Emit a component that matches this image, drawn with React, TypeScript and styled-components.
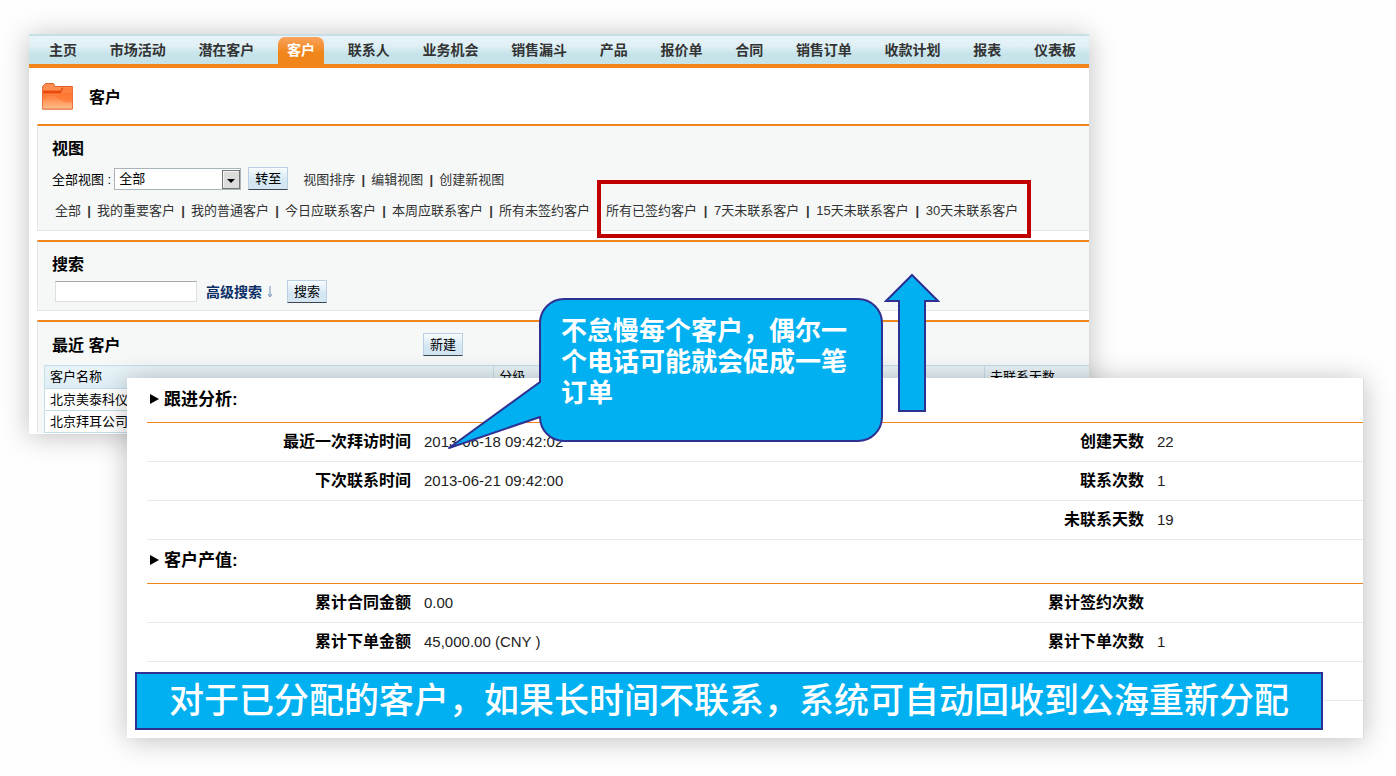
import React from "react";
import styled, { createGlobalStyle } from "styled-components";

const ORANGE = "#f08519";
const SKY = "#00b0f0";
const INDIGO = "#2e3192";

const GlobalStyle = createGlobalStyle`
  *, *::before, *::after { box-sizing: border-box; }
  body {
    margin: 0;
    background: #fefefe;
    color: #000;
    font-family: "Liberation Sans", "Noto Sans CJK SC", sans-serif;
    font-size: 13px;
    line-height: 20px;
  }
  h1, h2, p, ul { margin: 0; padding: 0; }
  button, input, select { font: inherit; color: inherit; }
`;

const Slide = styled.main`
  padding: 34px 32px 38px 29px;
  overflow: hidden;
`;

const Sheet = styled.section`
  background: #fff;
  box-shadow: 0 2px 26px rgba(0, 0, 0, 0.25);
`;

/* ---------- CRM window ---------- */

const CrmWindow = styled(Sheet)`
  margin-right: 275px;
  padding-bottom: 1px;
`;

const NavBar = styled.nav`
  display: flex;
  justify-content: space-between;
  align-items: flex-end;
  height: 34px;
  padding: 0 4px 0 11px;
  border-top: 2px solid #c8dfe7;
  border-bottom: 4px solid ${ORANGE};
  background: linear-gradient(#e8f3f8, #e0f0f5 35%, #c6e3ea 65%, #c6e3ea);
`;

const NavLink = styled.a<{ $active?: boolean }>`
  height: 27px;
  padding: 0 9px;
  border-radius: 7px 7px 0 0;
  font-size: 14px;
  font-weight: bold;
  line-height: 26px;
  white-space: nowrap;
  text-decoration: none;
  color: ${(p) => (p.$active ? "#fff" : "#333")};
  background: ${(p) => (p.$active ? `linear-gradient(#f9a25b, ${ORANGE} 60%)` : "none")};
`;

const PageHeader = styled.header`
  display: flex;
  align-items: center;
  gap: 16px;
  height: 56px;
  padding-left: 13px;
`;

const PageTitle = styled.h1`
  padding-top: 4px;
  font-size: 16px;
  line-height: 24px;
`;

const Block = styled.section`
  margin: 0 0 9px 8px;
  border-top: 2px solid ${ORANGE};
  border-left: 1px solid #e3e8e8;
  border-bottom: 1px solid #e3e8e8;
  background: #f6f8f8;

  &:last-child { margin-bottom: 0; border-bottom: 0; }
`;

const BlockTitle = styled.h2`
  padding: 11px 0 0 14px;
  font-size: 16px;
  line-height: 24px;
`;

const ViewRow = styled.div`
  display: flex;
  align-items: flex-end;
  height: 24px;
  margin-top: 5px;
  padding-left: 14px;
  white-space: nowrap;
`;

const SelectFrame = styled.span`
  position: relative;
  display: block;
  width: 127px;
  height: 22px;
  margin: 0 7px 0 3px;

  svg {
    position: absolute;
    top: 2px;
    right: 1px;
    pointer-events: none;
  }
`;

const ViewSelect = styled.select`
  width: 100%;
  height: 22px;
  padding: 0 4px;
  appearance: none;
  border: 1px solid #a9b3ba;
  border-radius: 0;
  background: #fff;
  line-height: 20px;
`;

const PushButton = styled.button`
  width: 40px;
  height: 23px;
  padding: 0;
  border: 1px solid #b9d0e4;
  border-bottom-color: #3d4650;
  background: linear-gradient(#f8fcfd, #d3e6f2 60%);
  line-height: 20px;
`;

const LinkList = styled.ul<{ $indent?: number; $gap?: number }>`
  display: flex;
  height: 20px;
  padding-left: ${(p) => p.$indent ?? 0}px;
  list-style: none;
  white-space: nowrap;

  li + li::before {
    content: "|";
    width: ${(p) => p.$gap ?? 16}px;
    text-align: center;
    font-weight: bold;
    color: #333;
  }
`;

const LinkItem = styled.li`
  display: flex;
`;

const TextLink = styled.a`
  color: #333;
  text-decoration: none;
`;

const ViewLinks = styled.div`
  display: flex;
  margin: 11px 0 9px;
`;

const Marked = styled.div`
  position: relative;
  margin-left: 16px;

  &::after {
    content: "";
    position: absolute;
    inset: -21px -13px -17px -9px;
    border: 4px solid #c00000;
    pointer-events: none;
  }
`;

const SearchForm = styled.form`
  display: flex;
  align-items: center;
  padding: 3px 0 7px 17px;
`;

const SearchBox = styled.input`
  width: 142px;
  height: 21px;
  padding: 0 4px;
  border: 1px solid #dcdfe0;
  border-top-color: #a5a9ab;
  background: #fff;
`;

const AdvancedLink = styled.a`
  display: flex;
  align-items: center;
  gap: 5px;
  margin: 0 14px 0 9px;
  font-size: 14px;
  font-weight: bold;
  color: #0b2f66;
  text-decoration: none;
`;

const RecentHead = styled.div`
  display: grid;
  grid-template-columns: 385px 40px;
  align-items: end;
  height: 43px;
  padding-bottom: 9px;

  ${BlockTitle} { padding-top: 0; line-height: 20px; }
`;

const CustomerTable = styled.table`
  width: calc(100% - 6px);
  margin-left: 6px;
  table-layout: fixed;
  border-collapse: collapse;
  background: #fff;

  th, td {
    height: 22px;
    padding: 0 5px;
    border: 1px solid #c5dfe8;
    border-right: 0;
    line-height: 20px;
    font-weight: normal;
    text-align: left;
    white-space: nowrap;
  }
  th { height: 23px; background: linear-gradient(#eaf4f8, #dcedf4); }
`;

/* ---------- Follow-up detail sheet ---------- */

const DetailSheet = styled(Sheet)`
  position: relative;
  min-height: 360px;
  margin: -56px 0 0 98px;
  padding: 1px 0 0 20px;
  border-right: 1px solid #dcdcdc;
`;

const DetailHeading = styled.h2`
  display: flex;
  align-items: center;
  gap: 5px;
  height: 44px;
  padding: 0 0 2px 3px;
  border-bottom: 1px solid ${ORANGE};
  font-size: 17px;
  line-height: 24px;
`;

const DetailTable = styled.table`
  width: 100%;
  table-layout: fixed;
  border-collapse: separate;
  border-spacing: 0;
  line-height: 24px;

  th, td {
    height: 39px;
    padding: 0;
    border-bottom: 1px solid #e9e9e9;
    white-space: nowrap;
  }
  th { padding-right: 13px; font-size: 16px; text-align: right; }
  td { font-size: 15px; color: #222; }
`;

const Banner = styled.p`
  position: absolute;
  left: 8px;
  right: 40px;
  bottom: 8px;
  height: 58px;
  border: 2px solid ${INDIGO};
  background: ${SKY};
  color: #fff;
  font-size: 35px;
  font-weight: 500;
  line-height: 54px;
  text-align: center;
  white-space: nowrap;
`;

const Callout = styled.aside`
  position: absolute;
  left: 320px;
  top: -81px;
  width: 437px;
  height: 153px;

  svg { display: block; }
`;

const CalloutText = styled.p`
  position: absolute;
  left: 114px;
  top: 19px;
  width: 290px;
  color: #fff;
  font-size: 26px;
  font-weight: bold;
  line-height: 31px;
`;

const UpArrow = styled.svg`
  position: absolute;
  left: 757px;
  top: -106px;
`;

const NAV = [
  "主页", "市场活动", "潜在客户", "客户", "联系人", "业务机会", "销售漏斗",
  "产品", "报价单", "合同", "销售订单", "收款计划", "报表", "仪表板",
];

const VIEW_ACTIONS = ["视图排序", "编辑视图", "创建新视图"];
const VIEWS = ["全部", "我的重要客户", "我的普通客户", "今日应联系客户", "本周应联系客户", "所有未签约客户"];
const MARKED_VIEWS = ["所有已签约客户", "7天未联系客户", "15天未联系客户", "30天未联系客户"];

type Pair = [string, string];
const FOLLOW_UP: [Pair, Pair][] = [
  [["最近一次拜访时间", "2013-06-18 09:42:02"], ["创建天数", "22"]],
  [["下次联系时间", "2013-06-21 09:42:00"], ["联系次数", "1"]],
  [["", ""], ["未联系天数", "19"]],
];
const VALUE: [Pair, Pair][] = [
  [["累计合同金额", "0.00"], ["累计签约次数", ""]],
  [["累计下单金额", "45,000.00 (CNY )"], ["累计下单次数", "1"]],
  [["", ""], ["", ""]],
];

function Links({ items, indent, gap }: { items: string[]; indent?: number; gap?: number }) {
  return (
    <LinkList $indent={indent} $gap={gap}>
      {items.map((t) => (
        <LinkItem key={t}>
          <TextLink href="#">{t}</TextLink>
        </LinkItem>
      ))}
    </LinkList>
  );
}

function FolderIcon() {
  return (
    <svg width="31" height="27" viewBox="0 0 31 27" aria-hidden="true">
      <defs>
        <linearGradient id="folderFront" x1="0" y1="0" x2="0" y2="1">
          <stop offset="0" stopColor="#ff7a3a" />
          <stop offset="0.5" stopColor="#ff8a4a" />
          <stop offset="1" stopColor="#ffc08f" />
        </linearGradient>
      </defs>
      <path d="M.5 26V3.500L3.500 .5H11.500l1.500 3h17.500V26z" fill="#ff8c50" stroke="#e0642a" />
      <path d="M1 7.500h18v-2.500h11v5H21l-3 2H1z" fill="#ee4a0c" />
      <path d="M1 10h17.500l2-5.500H30V26H1z" fill="url(#folderFront)" />
      <path d="M1 10h17.500l2-5.500" fill="none" stroke="#e8480f" />
      <path d="M1 17c6-6 12-5 16-1 4 3 9 4 13 3v-9H20l-2 2H1z" fill="#ff6a22" opacity=".45" />
      <path d="M.5 4v22h30V4" fill="none" stroke="#e8703a" />
    </svg>
  );
}

function Details({ title, rows }: { title: string; rows: [Pair, Pair][] }) {
  return (
    <section>
      <DetailHeading>
        <svg width="9" height="12" viewBox="0 0 9 12" aria-hidden="true">
          <path d="M0 0l9 5-9 5z" fill="#000" />
        </svg>
        {title}
      </DetailHeading>
      <DetailTable>
        <colgroup>
          <col style={{ width: 277 }} />
          <col />
          <col style={{ width: 140 }} />
          <col style={{ width: 206 }} />
        </colgroup>
        <tbody>
          {rows.map(([a, b], i) => (
            <tr key={i}>
              <th scope="row">{a[0]}</th>
              <td>{a[1]}</td>
              <th scope="row">{b[0]}</th>
              <td>{b[1]}</td>
            </tr>
          ))}
        </tbody>
      </DetailTable>
    </section>
  );
}

export default function App() {
  return (
    <>
      <GlobalStyle />
      <Slide>
        <CrmWindow>
          <NavBar>
            {NAV.map((t) => (
              <NavLink key={t} href="#" $active={t === "客户"}>
                {t}
              </NavLink>
            ))}
          </NavBar>
          <PageHeader>
            <FolderIcon />
            <PageTitle>客户</PageTitle>
          </PageHeader>

          <Block>
            <BlockTitle>视图</BlockTitle>
            <ViewRow>
              <label htmlFor="view">全部视图 :</label>
              <SelectFrame>
                <ViewSelect id="view" defaultValue="全部">
                  <option>全部</option>
                </ViewSelect>
                <svg width="18" height="19" viewBox="0 0 18 19" aria-hidden="true">
                  <rect x=".5" y=".5" width="17" height="18" fill="#dcdcdc" stroke="#777" />
                  <path d="M1.500 17V1.500H16" fill="none" stroke="#f4f4f4" />
                  <path d="M5 9h8l-4 4z" fill="#000" />
                </svg>
              </SelectFrame>
              <PushButton type="button">转至</PushButton>
              <Links items={VIEW_ACTIONS} indent={15} />
            </ViewRow>
            <ViewLinks>
              <Links items={VIEWS} indent={17} />
              <Marked>
                <Links items={MARKED_VIEWS} gap={17} />
              </Marked>
            </ViewLinks>
          </Block>

          <Block>
            <BlockTitle>搜索</BlockTitle>
            <SearchForm onSubmit={(e) => e.preventDefault()}>
              <SearchBox type="text" aria-label="搜索" />
              <AdvancedLink href="#">
                高级搜索
                <svg width="6" height="12" viewBox="0 0 6 12" aria-hidden="true">
                  <path d="M3 0v10M1 8l2 3 2-3" fill="none" stroke="#6f93b8" />
                </svg>
              </AdvancedLink>
              <PushButton type="submit">搜索</PushButton>
            </SearchForm>
          </Block>

          <Block>
            <RecentHead>
              <BlockTitle>最近 客户</BlockTitle>
              <PushButton type="button">新建</PushButton>
            </RecentHead>
            <CustomerTable>
              <colgroup>
                <col style={{ width: "43%" }} />
                <col style={{ width: "47%" }} />
                <col style={{ width: "10%" }} />
              </colgroup>
              <thead>
                <tr>
                  <th scope="col">客户名称</th>
                  <th scope="col">分级</th>
                  <th scope="col">未联系天数</th>
                </tr>
              </thead>
              <tbody>
                <tr>
                  <td>北京美泰科仪</td>
                  <td />
                  <td />
                </tr>
                <tr>
                  <td>北京拜耳公司</td>
                  <td />
                  <td />
                </tr>
              </tbody>
            </CustomerTable>
          </Block>
        </CrmWindow>

        <DetailSheet>
          <Details title="跟进分析:" rows={FOLLOW_UP} />
          <Details title="客户产值:" rows={VALUE} />
          <Banner>对于已分配的客户，如果长时间不联系，系统可自动回收到公海重新分配</Banner>
          <UpArrow width="56" height="141" viewBox="0 0 56 141" aria-hidden="true">
            <path
              d="M28 3L54 29H41V139H15V29H2z"
              fill={SKY}
              stroke={INDIGO}
              strokeWidth="2"
            />
          </UpArrow>
          <Callout>
            <svg width="437" height="153" viewBox="0 0 437 153" aria-hidden="true">
              <path
                d="M117 2H411A24 24 0 0 1 435 26V120A24 24 0 0 1 411 144H117A24 24 0 0 1 93 120L2 151L93 85V26A24 24 0 0 1 117 2z"
                fill={SKY}
                stroke={INDIGO}
                strokeWidth="2"
                strokeLinejoin="round"
              />
            </svg>
            <CalloutText>不怠慢每个客户，偶尔一个电话可能就会促成一笔订单</CalloutText>
          </Callout>
        </DetailSheet>
      </Slide>
    </>
  );
}
